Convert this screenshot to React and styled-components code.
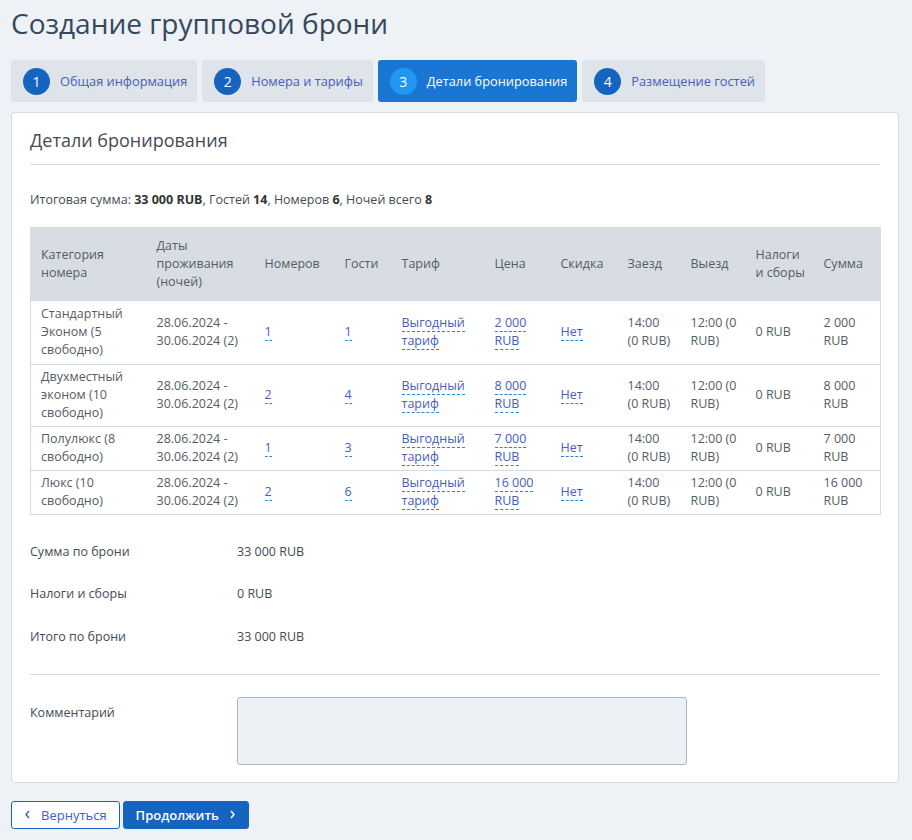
import React from "react";
import styled, { createGlobalStyle } from "styled-components";

const GlobalStyle = createGlobalStyle`
  html, body {
    margin: 0;
    padding: 0;
    background: #eef1f5;
    font-family: "Open Sans", "Noto Sans", sans-serif;
    color: #444b54;
  }
  * { box-sizing: border-box; }
`;

const Page = styled.div`
  padding: 0 13px 11px 11px;
  width: 912px;
`;

const Title = styled.h1`
  margin: 0;
  padding-top: 4px;
  height: 60px;
  font-size: 28px;
  font-weight: 400;
  color: #34495e;
  line-height: 38px;
`;

const Steps = styled.div`
  display: flex;
  gap: 5px;
  height: 42px;
`;

const Step = styled.div`
  display: flex;
  align-items: center;
  gap: 10px;
  padding: 0 10px 0 12px;
  white-space: nowrap;
  border-radius: 3px;
  background: ${(p) => (p.active ? "#1976d2" : "#dfe3ea")};
  color: ${(p) => (p.active ? "#fff" : "#4760b9")};
  font-size: 12.8px;
`;

const StepNum = styled.span`
  width: 27px;
  height: 27px;
  border-radius: 50%;
  background: ${(p) => (p.active ? "#2196f3" : "#1565c0")};
  color: #fff;
  display: flex;
  align-items: center;
  justify-content: center;
  font-size: 14px;
  flex-shrink: 0;
`;

const Card = styled.div`
  margin-top: 10px;
  background: #fff;
  border: 1px solid #d5dbe4;
  border-radius: 4px;
  padding: 14px 18px 17px 18px;
`;

const CardTitle = styled.h2`
  margin: 0;
  font-size: 18px;
  font-weight: 400;
  color: #444b54;
  line-height: 26px;
  padding-bottom: 11px;
  border-bottom: 1px solid #d5dbe4;
`;

const Summary = styled.div`
  font-size: 12.5px;
  margin: 26px 0 18px 0;
  line-height: 18px;
  b { font-weight: 700; color: #333; }
`;

const Table = styled.table`
  width: 850px;
  border-collapse: collapse;
  table-layout: fixed;
  font-size: 12.5px;
  border-left: 1px solid #d5dbe4;
  border-right: 1px solid #d5dbe4;
  border-bottom: 1px solid #d5dbe4;
  th {
    background: #d8dde3;
    font-weight: 400;
    text-align: left;
    padding: 9px 8px 9px 10px;
    height: 74px;
    line-height: 18px;
    color: #555c64;
  }
  td {
    padding: 3.5px 8px 3.5px 10px;
    line-height: 18px;
    vertical-align: middle;
    border-top: 1px solid #d5dbe4;
    color: #555c64;
  }
  tbody tr:first-child td { border-top: none; height: 63px; }
`;

const Dashed = styled.span`
  color: #4760b9;
  border-bottom: 1px dashed #1e88e5;
  cursor: pointer;
`;

const Totals = styled.div`
  display: flex;
  flex-direction: column;
  gap: 24.5px;
  margin-top: 28px;
  padding-bottom: 28px;
  border-bottom: 1px solid #d5dbe4;
`;

const Row = styled.div`
  display: flex;
  font-size: 12.5px;
  line-height: 18px;
`;

const Label = styled.div`
  width: 207px;
  flex-shrink: 0;
`;

const CommentRow = styled.div`
  display: flex;
  margin-top: 29px;
  font-size: 12.5px;
`;

const TextArea = styled.textarea`
  width: 450px;
  height: 68px;
  background: #edf0f4;
  border: 1px solid #a9b6c8;
  border-radius: 3px;
  resize: none;
  margin-top: -7px;
`;

const Buttons = styled.div`
  display: flex;
  gap: 3px;
  margin-top: 18px;
`;

const Button = styled.button`
  height: 28px;
  border-radius: 3px;
  font-family: "Open Sans", sans-serif;
  font-size: 13px;
  padding: 0 12px;
  display: flex;
  align-items: center;
  gap: 10px;
  border: 1px solid #1565c0;
  background: ${(p) => (p.primary ? "#1565c0" : "#fff")};
  color: ${(p) => (p.primary ? "#fff" : "#4760b9")};
  font-weight: ${(p) => (p.primary ? 600 : 400)};
  cursor: pointer;
`;

const Chevron = ({ dir }) => (
  <svg width="7" height="9" viewBox="0 0 7 9">
    <path
      d={dir === "left" ? "M5 1 L2 4.5 L5 8" : "M2 1 L5 4.5 L2 8"}
      fill="none"
      stroke="currentColor"
      strokeWidth="1.5"
    />
  </svg>
);

const steps = [
  { n: 1, label: "Общая информация" },
  { n: 2, label: "Номера и тарифы" },
  { n: 3, label: "Детали бронирования", active: true },
  { n: 4, label: "Размещение гостей" },
];

const cols = [116, 108, 80, 57, 93, 66, 67, 63, 65, 68, 67];

const rooms = [
  { name: "Стандартный Эконом (5 свободно)", rooms: 1, guests: 1, price: "2 000 RUB", sum: "2 000 RUB" },
  { name: "Двухместный эконом (10 свободно)", rooms: 2, guests: 4, price: "8 000 RUB", sum: "8 000 RUB" },
  { name: "Полулюкс (8 свободно)", rooms: 1, guests: 3, price: "7 000 RUB", sum: "7 000 RUB" },
  { name: "Люкс (10 свободно)", rooms: 2, guests: 6, price: "16 000 RUB", sum: "16 000 RUB" },
];

export default function App() {
  return (
    <>
      <GlobalStyle />
      <Page>
        <Title>Создание групповой брони</Title>
        <Steps>
          {steps.map((s) => (
            <Step key={s.n} active={s.active}>
              <StepNum active={s.active}>{s.n}</StepNum>
              {s.label}
            </Step>
          ))}
        </Steps>
        <Card>
          <CardTitle>Детали бронирования</CardTitle>
          <Summary>
            Итоговая сумма: <b>33 000 RUB</b>, Гостей <b>14</b>, Номеров <b>6</b>, Ночей всего <b>8</b>
          </Summary>
          <Table>
            <colgroup>
              {cols.map((w, i) => (
                <col key={i} style={{ width: w }} />
              ))}
            </colgroup>
            <thead>
              <tr>
                <th>Категория номера</th>
                <th>Даты проживания (ночей)</th>
                <th>Номеров</th>
                <th>Гости</th>
                <th>Тариф</th>
                <th>Цена</th>
                <th>Скидка</th>
                <th>Заезд</th>
                <th>Выезд</th>
                <th>Налоги и сборы</th>
                <th>Сумма</th>
              </tr>
            </thead>
            <tbody>
              {rooms.map((r) => (
                <tr key={r.name}>
                  <td>{r.name}</td>
                  <td>28.06.2024 - 30.06.2024 (2)</td>
                  <td><Dashed>{r.rooms}</Dashed></td>
                  <td><Dashed>{r.guests}</Dashed></td>
                  <td><Dashed>Выгодный тариф</Dashed></td>
                  <td><Dashed>{r.price}</Dashed></td>
                  <td><Dashed>Нет</Dashed></td>
                  <td>14:00 (0 RUB)</td>
                  <td>12:00 (0 RUB)</td>
                  <td>0 RUB</td>
                  <td>{r.sum}</td>
                </tr>
              ))}
            </tbody>
          </Table>
          <Totals>
            <Row><Label>Сумма по брони</Label>33 000 RUB</Row>
            <Row><Label>Налоги и сборы</Label>0 RUB</Row>
            <Row><Label>Итого по брони</Label>33 000 RUB</Row>
          </Totals>
          <CommentRow>
            <Label>Комментарий</Label>
            <TextArea />
          </CommentRow>
        </Card>
        <Buttons>
          <Button><Chevron dir="left" />Вернуться</Button>
          <Button primary>Продолжить<Chevron dir="right" /></Button>
        </Buttons>
      </Page>
    </>
  );
}
